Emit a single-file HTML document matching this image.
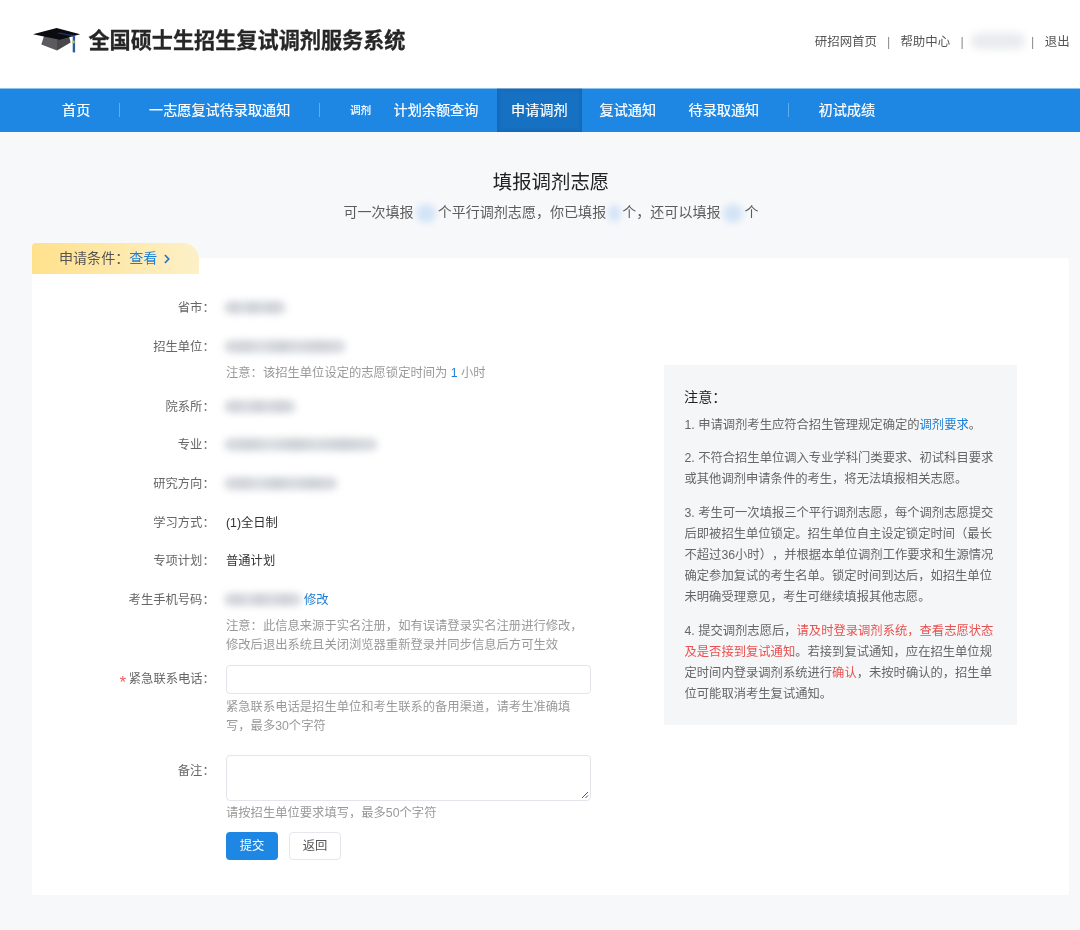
<!DOCTYPE html>
<html lang="zh-CN">
<head>
<meta charset="utf-8">
<title>全国硕士生招生复试调剂服务系统</title>
<style>
*{box-sizing:border-box;margin:0;padding:0}
html,body{width:1080px;height:930px;overflow:hidden}
body{background:#f7f8fa;font-family:"Liberation Sans","Noto Sans CJK SC",sans-serif;color:#333;position:relative;text-spacing-trim:space-all;font-kerning:none;font-size:12.3px}
.abs{position:absolute;white-space:nowrap}
#hdr,#nav,#main{will-change:transform}
#hdr{position:absolute;left:0;top:0;width:1080px;height:88px;background:#fff}
#logo{position:absolute;left:30px;top:24px}
#title{left:88.4px;top:26px;font-size:21.15px;line-height:30px;font-weight:700;color:#262626;-webkit-text-stroke:0.3px #262626}
.tl{top:32px;font-size:12.45px;line-height:20px;color:#555}
#nav{position:absolute;left:0;top:88px;width:1080px;height:44px;background:linear-gradient(180deg,#8ec3f1 0,#8ec3f1 1px,#1e87e3 1px,#1e87e3 44px)}
#nav .it{position:absolute;top:0;height:44px;line-height:45px;color:#fff;-webkit-text-stroke:0.2px #fff;font-size:14.13px;white-space:nowrap}
#nav .sep{position:absolute;top:15px;width:1px;height:14px;background:rgba(255,255,255,.3)}
#nav .act{position:absolute;left:497px;top:0;width:85px;height:44px;background:linear-gradient(180deg,#8bb7e0 0,#8bb7e0 1px,#1671c3 1px,#1671c3 44px);box-shadow:inset 0 0 4px rgba(0,30,80,.22)}
#h1{left:0;width:1102px;text-align:center;top:167px;font-size:19.4px;line-height:30px;color:#222}
#h2{left:0;width:1102px;text-align:center;top:201px;font-size:14.06px;line-height:22px;color:#5c5c5c}
.blob{display:inline-block;vertical-align:middle;background:#d3e4f6;border-radius:50%;filter:blur(3px)}
#tab{position:absolute;left:32px;top:243px;width:167px;height:31px;border-radius:4px 16px 0 0;background:linear-gradient(90deg,#ffe18c 0%,#feeab0 60%,#fdf0c8 100%)}
#card{position:absolute;left:32px;top:258px;width:1037px;height:637px;background:#fff;border-radius:2px}
.lb,.val,.nt,.bl{margin-top:1.2px}
.lb{position:absolute;left:32px;width:182.7px;text-align:right;font-size:12.3px;line-height:20px;color:#666;white-space:nowrap}
.val{position:absolute;left:226px;font-size:12.3px;line-height:20px;color:#333;white-space:nowrap}
.nt{position:absolute;left:226px;font-size:12.3px;line-height:19px;color:#999;white-space:nowrap}
.bl{position:absolute;left:224px;height:13px;border-radius:7px;filter:blur(3.5px);background:linear-gradient(90deg,#d9dce1 0,#cfd2d8 18%,#dcdfe4 30%,#cdd0d6 47%,#d9dce1 60%,#ced1d7 78%,#dbdee3 100%)}
.inp{position:absolute;left:226px;width:365px;background:#fff;border:1px solid #e3e5ea;border-radius:4px}
.btn{position:absolute;top:832px;height:28px;width:52px;border-radius:4px;font-size:12.3px;line-height:29px;text-align:center}
#box{position:absolute;left:664px;top:365px;width:352.5px;height:360px;background:#f5f6f8}
#box .h{position:absolute;left:20px;top:21.6px;font-size:14.13px;line-height:20px;color:#222}
#box p{position:absolute;left:20.5px;width:320px;font-size:12.3px;line-height:21px;color:#666;white-space:nowrap}
a{color:#1e7fd6;text-decoration:none}
.red{color:#e8514f}
</style>
</head>
<body>
<div id="hdr">
<svg id="logo" width="56" height="32" viewBox="30 24 56 32">
<polygon points="44.2,35.5 41.3,44.6 57,50.6 57,38" fill="#5b5b5d"/>
<polygon points="57,38 57,50.6 70.6,42.6 69,36" fill="#48484a"/>
<polygon points="33,34.3 56.6,28 80.2,34.3 59.8,39.8" fill="#0b0b10"/>
<polygon points="57,33.2 59.5,32.6 75,35.4 72.7,36.6" fill="#173a68"/>
<rect x="72.7" y="35.6" width="2.4" height="16.8" fill="#2b5c9e"/>
<rect x="72.4" y="40.6" width="2.2" height="2.6" fill="#c9c95a"/>
</svg>
<div class="abs" id="title">全国硕士生招生复试调剂服务系统</div>
<div class="abs tl" style="left:814.8px">研招网首页</div>
<div class="abs tl" style="left:887px;color:#8a8a8a">|</div>
<div class="abs tl" style="left:900.4px">帮助中心</div>
<div class="abs tl" style="left:960.5px;color:#8a8a8a">|</div>
<div class="abs" style="left:971px;top:33px;width:54px;height:16px;background:#e8eaed;border-radius:8px;filter:blur(4px)"></div>
<div class="abs tl" style="left:1031px;color:#8a8a8a">|</div>
<div class="abs tl" style="left:1044.7px">退出</div>
</div>
<div id="nav">
<div class="act"></div>
<div class="it" style="left:62px">首页</div>
<div class="sep" style="left:119px"></div>
<div class="it" style="left:149px">一志愿复试待录取通知</div>
<div class="sep" style="left:319px"></div>
<div class="it" style="left:350px;font-size:10.6px">调剂</div>
<div class="it" style="left:393.5px">计划余额查询</div>
<div class="it" style="left:511px">申请调剂</div>
<div class="it" style="left:599.5px">复试通知</div>
<div class="it" style="left:688.5px">待录取通知</div>
<div class="sep" style="left:788px"></div>
<div class="it" style="left:818.5px">初试成绩</div>
</div>
<div id="main">
<div class="abs" id="h1">填报调剂志愿</div>
<div class="abs" id="h2">可一次填报<span class="blob" style="width:20px;height:19px;margin:0 2px"></span>个平行调剂志愿，你已填报<span class="blob" style="width:13px;height:17px;margin:0 1.5px"></span>个，还可以填报<span class="blob" style="width:20px;height:19px;margin:0 2px"></span>个</div>
<div id="card"></div>
<div id="tab"></div>
<div class="abs" style="left:59px;top:248px;font-size:14.06px;line-height:20px;color:#555">申请条件：<a>查看</a></div>
<svg class="abs" style="left:162.8px;top:252.5px" width="8" height="12" viewBox="0 0 8 12"><path d="M1.9 2 L5.7 6 L1.9 10" fill="none" stroke="#2a74c2" stroke-width="1.7"/></svg>
<div class="lb" style="top:297px">省市：</div><div class="bl" style="top:300px;width:62px"></div>
<div class="lb" style="top:336px">招生单位：</div><div class="bl" style="top:339px;width:122px"></div>
<div class="nt" style="top:362.5px">注意：该招生单位设定的志愿锁定时间为 <span style="color:#1e7fd6">1</span> 小时</div>
<div class="lb" style="top:396px">院系所：</div><div class="bl" style="top:399px;width:72px"></div>
<div class="lb" style="top:434px">专业：</div><div class="bl" style="top:437px;width:154px"></div>
<div class="lb" style="top:473px">研究方向：</div><div class="bl" style="top:476px;width:114px"></div>
<div class="lb" style="top:512px">学习方式：</div><div class="val" style="top:512px">(1)全日制</div>
<div class="lb" style="top:550px">专项计划：</div><div class="val" style="top:550px">普通计划</div>
<div class="lb" style="top:589px">考生手机号码：</div><div class="bl" style="top:592px;width:78px"></div><div class="val" style="top:589px;left:304px"><a>修改</a></div>
<div class="nt" style="top:616.3px">注意：此信息来源于实名注册，如有误请登录实名注册进行修改，</div>
<div class="nt" style="top:635.3px">修改后退出系统且关闭浏览器重新登录并同步信息后方可生效</div>
<div class="abs" id="star" style="left:119.4px;top:672.8px;font-size:17px;line-height:20px;color:#f0605f">*</div><div class="lb" style="top:668px;width:182.9px">紧急联系电话：</div><div class="inp" style="top:665px;height:29px"></div>
<div class="nt" style="top:696.6px">紧急联系电话是招生单位和考生联系的备用渠道，请考生准确填</div>
<div class="nt" style="top:715.5px">写，最多30个字符</div>
<div class="lb" style="top:760px">备注：</div><div class="inp" style="top:755px;height:46px"></div><svg class="abs" style="left:581px;top:791px" width="8" height="8" viewBox="0 0 8 8"><path d="M7 1 L1 7 M7 4.5 L4.5 7" stroke="#555" stroke-width="1" fill="none"/></svg>
<div class="nt" style="top:802.5px">请按招生单位要求填写，最多50个字符</div>
<div class="btn" style="left:226px;background:#1e87e3;color:#fff">提交</div>
<div class="btn" style="left:289px;background:#fff;color:#555;border:1px solid #e4e7ec;line-height:27px;border-radius:4px">返回</div>

<div id="box">
<div class="h">注意：</div>
<p style="top:49.5px">1. 申请调剂考生应符合招生管理规定确定的<a>调剂要求</a>。</p>
<p style="top:82.5px">2. 不符合招生单位调入专业学科门类要求、初试科目要求</p>
<p style="top:103.5px">或其他调剂申请条件的考生，将无法填报相关志愿。</p>
<p style="top:137.5px">3. 考生可一次填报三个平行调剂志愿，每个调剂志愿提交</p>
<p style="top:158.5px">后即被招生单位锁定。招生单位自主设定锁定时间（最长</p>
<p style="top:179.5px">不超过36小时），并根据本单位调剂工作要求和生源情况</p>
<p style="top:200.5px">确定参加复试的考生名单。锁定时间到达后，如招生单位</p>
<p style="top:221.5px">未明确受理意见，考生可继续填报其他志愿。</p>
<p style="top:255.5px">4. 提交调剂志愿后，<span class="red">请及时登录调剂系统，查看志愿状态</span></p>
<p style="top:276.5px"><span class="red">及是否接到复试通知</span>。若接到复试通知，应在招生单位规</p>
<p style="top:297.5px">定时间内登录调剂系统进行<span class="red">确认</span>，未按时确认的，招生单</p>
<p style="top:318.5px">位可能取消考生复试通知。</p>
</div>
</div>
</body>
</html>
